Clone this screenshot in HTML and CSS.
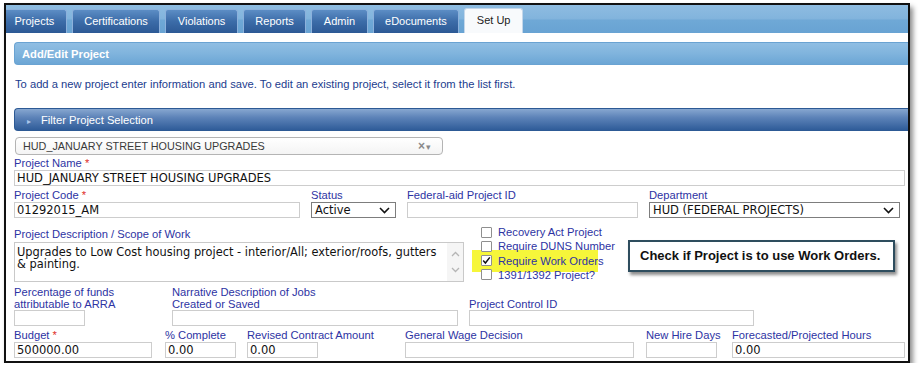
FILE: index.html
```html
<!DOCTYPE html>
<html>
  <head>
    <meta charset="utf-8">
    <title>Add/Edit Project</title>
    <link rel="stylesheet" href="styles.css">
  </head>
  <body>
    <div class="frame">
      <div class="tabbar">
        <a class="tab first">Projects</a>
        <a class="tab">Certifications</a>
        <a class="tab">Violations</a>
        <a class="tab">Reports</a>
        <a class="tab">Admin</a>
        <a class="tab">eDocuments</a>
        <a class="tab active">Set Up</a>
      </div>
      <div class="panel">
        <div class="panel-head">Add/Edit Project</div>
        <p class="intro">To add a new project enter information and save. To edit an existing project, select it from the list first.</p>
        <div class="filter-head"><span class="arrow">&#9656;</span>Filter Project Selection</div>
        <div class="picker">
          <span>HUD_JANUARY STREET HOUSING UPGRADES</span>
          <span class="picker-ctl"><b>&times;</b>&#9662;</span>
        </div>

        <div class="field f-name">
          <label class="lbl">Project Name <span class="req">*</span></label>
          <input class="txt w-name" value="HUD_JANUARY STREET HOUSING UPGRADES">
        </div>

        <div class="row row-code">
          <div class="field">
            <label class="lbl">Project Code <span class="req">*</span></label>
            <input class="txt w-code" value="01292015_AM">
          </div>
          <div class="field">
            <label class="lbl">Status</label>
            <div class="sel w-status"><span>Active</span>
              <svg width="11" height="7" viewBox="0 0 11 7"><polyline points="1,1 5.5,5.5 10,1" fill="none" stroke="#111" stroke-width="1.6"/></svg>
            </div>
          </div>
          <div class="field">
            <label class="lbl">Federal-aid Project ID</label>
            <input class="txt w-fed" value="">
          </div>
          <div class="field">
            <label class="lbl">Department</label>
            <div class="sel w-dept"><span>HUD (FEDERAL PROJECTS)</span>
              <svg width="11" height="7" viewBox="0 0 11 7"><polyline points="1,1 5.5,5.5 10,1" fill="none" stroke="#111" stroke-width="1.6"/></svg>
            </div>
          </div>
        </div>

        <div class="row row-desc">
          <div class="field">
            <label class="lbl">Project Description / Scope of Work</label>
            <div class="area">
              <div class="area-text">Upgrades to Low Cost housing project - interior/All; exterior/roofs, gutters &amp; painting.</div>
              <div class="area-scroll">
                <svg width="9" height="6" viewBox="0 0 9 6"><polyline points="1,5 4.5,1.5 8,5" fill="none" stroke="#b5b5b5" stroke-width="1.3"/></svg>
                <svg width="9" height="6" viewBox="0 0 9 6"><polyline points="1,1 4.5,4.5 8,1" fill="none" stroke="#b5b5b5" stroke-width="1.3"/></svg>
              </div>
            </div>
          </div>
          <div class="checks">
            <div class="chk"><span class="box"></span>Recovery Act Project</div>
            <div class="chk"><span class="box"></span>Require DUNS Number</div>
            <div class="chk hl"><span class="box"><svg width="9" height="9" viewBox="0 0 9 9"><polyline points="1.2,4.6 3.4,7 7.8,1.4" fill="none" stroke="#111" stroke-width="1.5"/></svg></span>Require Work Orders</div>
            <div class="chk"><span class="box"></span>1391/1392 Project?</div>
          </div>
        </div>

        <div class="row row-arra">
          <div class="field f-pct">
            <label class="lbl">Percentage of funds<br>attributable to ARRA</label>
            <input class="txt w-pct" value="">
          </div>
          <div class="field f-narr">
            <label class="lbl">Narrative Description of Jobs<br>Created or Saved</label>
            <input class="txt w-narr" value="">
          </div>
          <div class="field">
            <label class="lbl">Project Control ID</label>
            <input class="txt w-ctrl" value="">
          </div>
        </div>

        <div class="row row-budget">
          <div class="field f-budget">
            <label class="lbl">Budget <span class="req">*</span></label>
            <input class="txt w-budget" value="500000.00">
          </div>
          <div class="field f-done">
            <label class="lbl">% Complete</label>
            <input class="txt w-small" value="0.00">
          </div>
          <div class="field f-rev">
            <label class="lbl">Revised Contract Amount</label>
            <input class="txt w-small" value="0.00">
          </div>
          <div class="field f-wage">
            <label class="lbl">General Wage Decision</label>
            <input class="txt w-wage" value="">
          </div>
          <div class="field f-hire">
            <label class="lbl">New Hire Days</label>
            <input class="txt w-small" value="">
          </div>
          <div class="field">
            <label class="lbl">Forecasted/Projected Hours</label>
            <input class="txt w-hours" value="0.00">
          </div>
        </div>
      </div>
      <div class="callout">Check if Project is to use Work Orders.</div>
    </div>
  </body>
</html>
```

FILE: styles.css
```css
* {
box-sizing: border-box;
}
body {
margin: 0;
background: #fff;
font-family: "Liberation Sans", Arial, sans-serif;
}
.frame {
position: relative;
width: 906px;
height: 360px;
margin: 3px 0 0 4px;
border: 2px solid #111;
overflow: hidden;
background: #fff;
box-shadow: 3px 4px 5px rgba(0, 0, 0, 0.45);
}
/* tab strip */
.tabbar {
display: flex;
align-items: flex-end;
gap: 5px;
height: 28px;
background: linear-gradient(#8ebce1, #82b4dd 48%, #6fa8d6 55%, #68a3d3);
}
.tab {
display: block;
height: 24px;
line-height: 23px;
padding: 0 11.5px;
font-size: 11px;
color: #fff;
background: linear-gradient(#5c8dc5, #3c6ca8 50%, #2c5995);
border: 1px solid #8cb1dc;
border-bottom: 0;
border-radius: 3px 3px 0 0;
}
.tab.first {
margin-left: -4px;
}
.tab.active {
height: 25px;
color: #222;
background: #f8fafc;
border-color: #c4d7ea;
}
/* panel */
.panel {
padding: 9px 0 0 8px;
}
.panel-head {
height: 23px;
line-height: 22px;
padding-left: 7px;
font-size: 11.2px;
font-weight: bold;
color: #fff;
background: linear-gradient(#90bee3, #80b4dd 50%, #6ca6d5);
border: 1px solid #6aa3d2;
border-right: 0;
border-radius: 4px 0 0 4px;
}
.intro {
margin: 12px 0 17px 1px;
line-height: 14px;
font-size: 11.2px;
color: #1b3c8e;
}
.filter-head {
height: 23px;
line-height: 22px;
padding-left: 12px;
font-size: 11.2px;
color: #fff;
background: linear-gradient(#87a7d0, #5d83b8 40%, #2f5c99);
border: 1px solid #2d5a95;
border-right: 0;
border-radius: 4px 0 0 4px;
}
.arrow {
display: inline-block;
width: 14px;
font-size: 8px;
color: #a9c6ea;
}
.picker {
display: flex;
justify-content: space-between;
align-items: center;
width: 428px;
height: 18px;
margin: 6px 0 0 1px;
padding: 0 11px 0 7px;
font-size: 10.8px;
color: #3a3a3a;
background: linear-gradient(#fff, #f4f4f4);
border: 1px solid #b4b4b4;
border-radius: 4px;
}
.picker-ctl {
font-size: 9px;
color: #8a8a8a;
}
.picker-ctl b {
font-size: 12px;
margin-right: 1px;
}
/* form fields */
.field {
display: flex;
flex-direction: column;
}
.lbl {
display: block;
line-height: 13px;
font-size: 11.2px;
color: #2d33a3;
}
.row-arra .lbl {
line-height: 12px;
}
.req {
color: #e0302c;
}
.txt, .sel {
height: 16px;
padding: 0 2px;
font-family: "DejaVu Sans", Verdana, sans-serif;
font-size: 11.5px;
line-height: 14px;
color: #111;
background: #fff;
border: 1px solid #cdcdcd;
border-radius: 0;
outline: none;
}
.sel {
display: flex;
justify-content: space-between;
align-items: center;
padding: 0 5px 0 3px;
border-color: #7d7d7d;
}
.row {
display: flex;
align-items: flex-end;
}
.f-name {
margin-top: 2px;
}
.w-name { width: 891px; }
.row-code {
gap: 11px;
margin-top: 3px;
}
.w-code { width: 286px; }
.w-status { width: 85px; }
.w-fed { width: 231px; }
.w-dept { width: 251px; }
.row-desc {
margin-top: 7px;
}
.area {
display: flex;
width: 450px;
height: 40px;
margin-top: 1px;
border: 1px solid #c9c9c9;
}
.area-text {
flex: 1;
padding: 3px 0 0 2px;
font-family: "DejaVu Sans", Verdana, sans-serif;
font-size: 11.4px;
line-height: 12px;
color: #111;
}
.area-scroll {
display: flex;
flex-direction: column;
justify-content: space-between;
align-items: center;
width: 16px;
padding: 8px 0 8px;
background: #f5f5f5;
}
.checks {
margin-left: 17px;
}
.chk {
display: flex;
align-items: center;
height: 14.25px;
font-size: 11.2px;
white-space: nowrap;
color: #2d33a3;
}
.chk.hl {
width: 126px;
margin: -4px 0 -4px -9px;
padding: 4px 0 4px 9px;
height: 22.25px;
background: #f6f63a;
}
.box {
display: flex;
align-items: center;
justify-content: center;
width: 11px;
height: 11px;
margin-right: 6px;
background: #fff;
border: 1px solid #8f8f8f;
border-radius: 1px;
}
.row-arra {
margin-top: 4px;
}
.f-pct { width: 158px; }
.w-pct { width: 71px; }
.f-narr { width: 297px; }
.w-narr { width: 286px; }
.w-ctrl { width: 285px; }
.row-budget {
margin-top: 3px;
}
.f-budget { width: 151px; }
.w-budget { width: 138px; }
.f-done { width: 82px; }
.w-small { width: 71px; }
.f-rev { width: 158px; }
.f-wage { width: 241px; }
.w-wage { width: 229px; }
.f-hire { width: 86px; }
.w-hours { width: 173px; }
/* tip box laid over the form */
.callout {
position: absolute;
left: 622px;
top: 235px;
width: 267px;
height: 32px;
padding-left: 10px;
line-height: 28px;
font-size: 13px;
font-weight: bold;
color: #111;
background: #fff;
border: 2px solid #2e4d5e;
box-shadow: 2px 3px 3px rgba(0, 0, 0, 0.45);
}
```
